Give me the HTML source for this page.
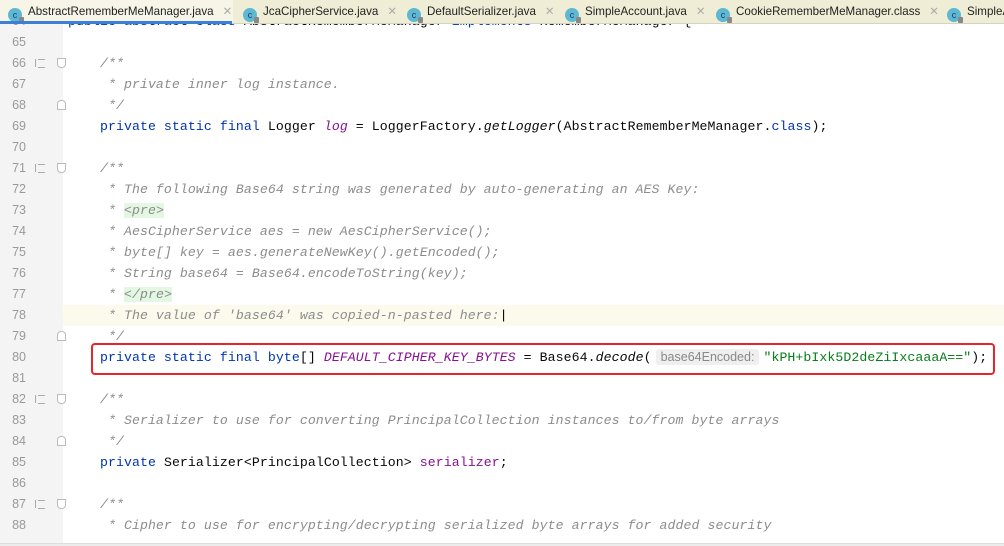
<!DOCTYPE html>
<html><head><meta charset="utf-8"><style>
*{margin:0;padding:0;box-sizing:border-box}
body{width:1004px;height:546px;overflow:hidden;background:#fff;position:relative;font-family:"Liberation Mono",monospace}
.tabs{position:absolute;left:0;top:0;width:1004px;height:24px;background:#efedd6;border-bottom:1px solid #d6d4c0;z-index:5;font-family:"Liberation Sans",sans-serif;font-size:11.6px;color:#222;white-space:nowrap;overflow:hidden}
.tab{position:absolute;top:0;height:23px;line-height:23px}
.ic{display:inline-block;width:14px;height:14px;border-radius:50%;background:#5eb7d3;color:#1b3d55;font-size:9px;line-height:14px;text-align:center;vertical-align:-3px;margin-right:6px;position:relative}
.ic:after{content:"";position:absolute;right:-2px;bottom:-1px;width:5px;height:6px;background:#888;border-radius:1px}
.x{color:#aaa;margin-left:9px}
.active{background:#f6f5e8}
.uline{position:absolute;left:0;top:21px;width:232px;height:3px;background:#3d7fd6;z-index:6}
.gut{position:absolute;left:0;top:0;width:63px;height:546px;background:#f4f4f4}
.row{position:absolute;left:0;height:21px;line-height:21px;font-size:13.2px;letter-spacing:0.08px;white-space:pre;width:1004px;overflow:hidden}
.ln{position:absolute;left:0;width:26px;text-align:right;color:#999;font-family:"Liberation Sans",sans-serif;font-size:12.5px;letter-spacing:0}
.code{position:absolute;left:68px;color:#080808}
.k{color:#0033b3}
.c{color:#8c8c8c;font-style:italic}
.tg{background:#e3f7e3;color:#8c8c8c}
.f{color:#871094}
.fi{color:#871094;font-style:italic}
.it{font-style:italic}
.s{color:#067d17}
.hint{font-family:"Liberation Sans",sans-serif;font-size:12.5px;letter-spacing:0;color:#888;background:#efefef;border-radius:3px;padding:1px 5px;margin:0 4px}
.m{position:absolute;left:35px;top:6px;width:10px;height:8px;border-left:1.5px solid #aaa}
.m:after{content:"";position:absolute;left:2px;top:0;width:7px;height:7px;border-top:1.5px solid #aaa;border-bottom:1.5px solid #aaa}
.fd{position:absolute;left:57px;top:5px;width:9px;height:10px;border:1px solid #bbb;border-radius:0 0 4px 4px;background:#fff}
.fu{position:absolute;left:57px;top:5px;width:9px;height:10px;border:1px solid #bbb;border-radius:4px 4px 0 0;background:#fff}
.hl{background:#fcfaed}
.box{position:absolute;left:91px;top:343px;width:904px;height:32px;border:2px solid #e8262a;border-radius:4px;z-index:3}
.bot{position:absolute;left:0;top:543px;width:1004px;height:3px;background:#ececec;border-top:1px solid #ddd;z-index:4}
</style></head><body>
<div class="gut"></div>
<div class="row" style="top:11px"><span class="ln">64</span><span class="code"><span class="k">public abstract class</span> AbstractRememberMeManager <span class="k">implements</span> RememberMeManager {</span></div>
<div class="row" style="top:32px"><span class="ln">65</span></div>
<div class="row" style="top:53px"><span class="ln">66</span><span class="m"></span><span class="fd"></span><span class="code c">    /**</span></div>
<div class="row" style="top:74px"><span class="ln">67</span><span class="code c">     * private inner log instance.</span></div>
<div class="row" style="top:95px"><span class="ln">68</span><span class="fu"></span><span class="code c">     */</span></div>
<div class="row" style="top:116px"><span class="ln">69</span><span class="code">    <span class="k">private static final</span> Logger <span class="fi">log</span> = LoggerFactory.<span class="it">getLogger</span>(AbstractRememberMeManager.<span class="k">class</span>);</span></div>
<div class="row" style="top:137px"><span class="ln">70</span></div>
<div class="row" style="top:158px"><span class="ln">71</span><span class="m"></span><span class="fd"></span><span class="code c">    /**</span></div>
<div class="row" style="top:179px"><span class="ln">72</span><span class="code c">     * The following Base64 string was generated by auto-generating an AES Key:</span></div>
<div class="row" style="top:200px"><span class="ln">73</span><span class="code c">     * <span class="tg">&lt;pre&gt;</span></span></div>
<div class="row" style="top:221px"><span class="ln">74</span><span class="code c">     * AesCipherService aes = new AesCipherService();</span></div>
<div class="row" style="top:242px"><span class="ln">75</span><span class="code c">     * byte[] key = aes.generateNewKey().getEncoded();</span></div>
<div class="row" style="top:263px"><span class="ln">76</span><span class="code c">     * String base64 = Base64.encodeToString(key);</span></div>
<div class="row" style="top:284px"><span class="ln">77</span><span class="code c">     * <span class="tg">&lt;/pre&gt;</span></span></div>
<div class="row" style="top:305px"><span class="ln">78</span><div class="hl" style="position:absolute;left:63px;top:0;width:941px;height:21px"></div><span class="code c">     * The value of 'base64' was copied-n-pasted here:<span style="font-style:normal;color:#000">|</span></span></div>
<div class="row" style="top:326px"><span class="ln">79</span><span class="fu"></span><span class="code c">     */</span></div>
<div class="row" style="top:347px"><span class="ln">80</span><span class="code">    <span class="k">private static final byte</span>[] <span class="fi">DEFAULT_CIPHER_KEY_BYTES</span> = Base64.<span class="it">decode</span>(<span class="hint">base64Encoded:</span><span class="s">"kPH+bIxk5D2deZiIxcaaaA=="</span>);</span></div>
<div class="row" style="top:368px"><span class="ln">81</span></div>
<div class="row" style="top:389px"><span class="ln">82</span><span class="m"></span><span class="fd"></span><span class="code c">    /**</span></div>
<div class="row" style="top:410px"><span class="ln">83</span><span class="code c">     * Serializer to use for converting PrincipalCollection instances to/from byte arrays</span></div>
<div class="row" style="top:431px"><span class="ln">84</span><span class="fu"></span><span class="code c">     */</span></div>
<div class="row" style="top:452px"><span class="ln">85</span><span class="code">    <span class="k">private</span> Serializer&lt;PrincipalCollection&gt; <span class="f">serializer</span>;</span></div>
<div class="row" style="top:473px"><span class="ln">86</span></div>
<div class="row" style="top:494px"><span class="ln">87</span><span class="m"></span><span class="fd"></span><span class="code c">    /**</span></div>
<div class="row" style="top:515px"><span class="ln">88</span><span class="code c">     * Cipher to use for encrypting/decrypting serialized byte arrays for added security</span></div>
<div class="box"></div>
<div class="bot"></div>
<div class="tabs">
<div class="tab active" style="left:0;width:233px;padding-left:8px"><span class="ic">c</span>AbstractRememberMeManager.java<span class="x">✕</span></div>
<div class="tab" style="left:243px"><span class="ic">c</span>JcaCipherService.java<span class="x">✕</span></div>
<div class="tab" style="left:407px"><span class="ic">c</span>DefaultSerializer.java<span class="x">✕</span></div>
<div class="tab" style="left:565px"><span class="ic">c</span>SimpleAccount.java<span class="x">✕</span></div>
<div class="tab" style="left:716px"><span class="ic">c</span>CookieRememberMeManager.class<span class="x">✕</span></div>
<div class="tab" style="left:947px"><span class="ic">c</span>SimpleAccountRealm.java</div>
</div>
<div class="uline"></div>
</body></html>
